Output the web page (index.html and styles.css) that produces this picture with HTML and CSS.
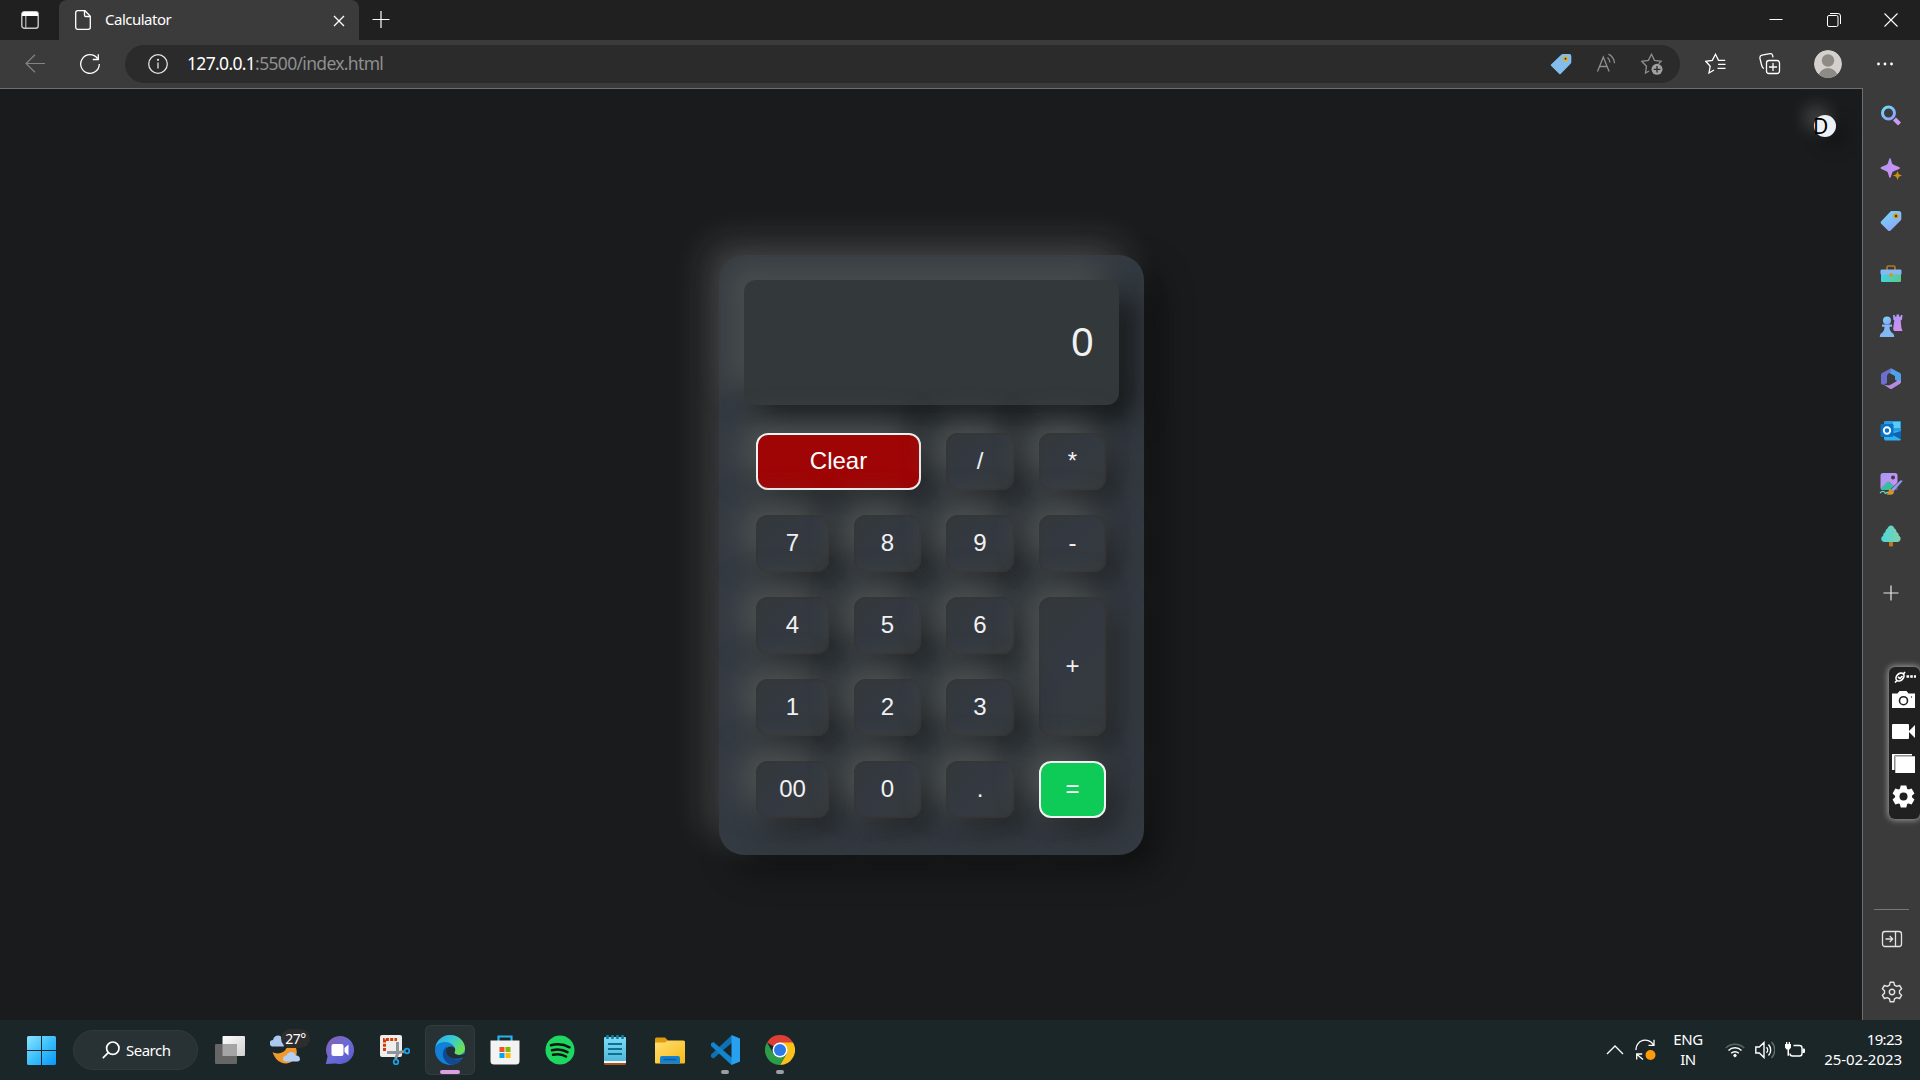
FILE: index.html
```html
<!DOCTYPE html>
<html lang="en">
<head>
<meta charset="utf-8">
<title>Calculator</title>
<link rel="stylesheet" href="styles.css">
</head>
<body>
<svg width="0" height="0" class="defs">
  <defs>
    <linearGradient id="blue" x1="0" y1="0" x2="0.6" y2="1"><stop offset="0" stop-color="#6fdcf8"/><stop offset="1" stop-color="#8ea6fb"/></linearGradient>
    <linearGradient id="violet" x1="0" y1="0" x2="0.7" y2="1"><stop offset="0" stop-color="#9d9cf5"/><stop offset="1" stop-color="#d98cf2"/></linearGradient>
    <linearGradient id="green" x1="0" y1="0" x2="1" y2="0"><stop offset="0" stop-color="#3fd3e4"/><stop offset="1" stop-color="#5cc98c"/></linearGradient>
    <linearGradient id="tree" x1="0" y1="0" x2="1" y2="0"><stop offset="0" stop-color="#4bd6dc"/><stop offset="1" stop-color="#80d1a8"/></linearGradient>
    <linearGradient id="win" x1="0" y1="0" x2="1" y2="1"><stop offset="0" stop-color="#8be4ff"/><stop offset=".5" stop-color="#3cc0fb"/><stop offset="1" stop-color="#0a96f8"/></linearGradient>
    <linearGradient id="edgeTop" x1="0" y1="0" x2="1" y2=".6"><stop offset="0" stop-color="#2ea8e4"/><stop offset=".5" stop-color="#35c9d8"/><stop offset="1" stop-color="#6fe04e"/></linearGradient>
    <linearGradient id="chat" x1="0" y1="0" x2="1" y2="1"><stop offset="0" stop-color="#8c5fae"/><stop offset=".5" stop-color="#6a6bd6"/><stop offset="1" stop-color="#5957cf"/></linearGradient>
    <linearGradient id="folder" x1="0" y1="0" x2="1" y2="1"><stop offset="0" stop-color="#ffdf73"/><stop offset="1" stop-color="#f9b915"/></linearGradient>
    <linearGradient id="silver" x1="0" y1="0" x2="1" y2="1"><stop offset="0" stop-color="#ffffff"/><stop offset="1" stop-color="#cfcfcf"/></linearGradient>
    <linearGradient id="pad" x1="0" y1="0" x2="0" y2="1"><stop offset="0" stop-color="#7fdcf4"/><stop offset="1" stop-color="#4fb9d8"/></linearGradient>
  </defs>
</svg>

<header class="titlebar">
  <div class="tab-actions">
    <svg width="18" height="18" viewBox="0 0 18 18"><rect x=".8" y=".8" width="16.4" height="16.4" rx="2.5" fill="none" stroke="#c8c8c8" stroke-width="1.4"/><path d="M1 5V3a2 2 0 0 1 2-2h12a2 2 0 0 1 2 2v2z" fill="#fff"/><path d="M4.8 5v12" stroke="#b8b8b8" stroke-width="1.2"/></svg>
  </div>
  <div class="tab">
    <svg width="16" height="20" viewBox="0 0 16 20" fill="none" stroke="#fff" stroke-width="1.3"><path d="M2.7.7H10l5.3 5.6v11a2 2 0 0 1-2 2H2.7a2 2 0 0 1-2-2V2.7a2 2 0 0 1 2-2z"/><path d="M9.5 1v4.200a1.300 1.300 0 0 0 1.300 1.300H15"/></svg>
    <span class="tab-title">Calculator</span>
    <svg class="tab-close" width="12" height="12" viewBox="0 0 12 12" stroke="#fff" stroke-width="1.3"><path d="M1 1l10 10M11 1L1 11"/></svg>
  </div>
  <svg class="new-tab" width="18" height="18" viewBox="0 0 18 18" stroke="#fff" stroke-width="1.2"><path d="M.5 8.500h17M9 0v17"/></svg>
  <div class="window-buttons">
    <svg width="14" height="14" viewBox="0 0 14 14" stroke="#fff" stroke-width="1"><path d="M.5 6.500h13"/></svg>
    <svg width="14" height="14" viewBox="0 0 14 14" fill="none" stroke="#fff" stroke-width="1"><rect x=".5" y="2.500" width="10.500" height="11" rx="1.500"/><path d="M3 .5h8a2.500 2.500 0 0 1 2.500 2.500v8"/></svg>
    <svg width="14" height="14" viewBox="0 0 14 14" stroke="#fff" stroke-width="1.100"><path d="M.5.5l13 13M13.500.5l-13 13"/></svg>
  </div>
</header>

<nav class="toolbar">
  <svg class="back" width="20" height="20" viewBox="0 0 20 20" fill="none" stroke="#838383" stroke-width="1.200"><path d="M20 9.500H1M10 .7L1 9.500l9 8.800"/></svg>
  <svg class="reload" width="20" height="20" viewBox="0 0 20 20" fill="none" stroke="#fff" stroke-width="1.300"><path d="M17.500 4.500A9.300 9.300 0 1 0 19.300 10M18.300.3v5.200h-5.500"/></svg>
  <div class="address">
    <svg class="info" width="20" height="20" viewBox="0 0 20 20" fill="none" stroke="#e2e2e2" stroke-width="1.300"><circle cx="10" cy="10" r="9.300"/><path d="M10 8.500v6"/><circle cx="10" cy="5.800" r=".5"/></svg>
    <span class="url"><b>127.0.0.1</b>:5500/index.html</span>
    <div class="address-icons">
      <svg width="22" height="22" viewBox="0 0 22 22"><path d="M11.500 1.500L1 11.500a1 1 0 0 0 0 1.200l8.300 8.200a1 1 0 0 0 1.300 0l10-10.200c.4-.4.700-1 .7-1.600V3a2 2 0 0 0-2-2h-6.500c-.5 0-1 .2-1.300.5z" fill="#84bdec"/><circle cx="15.500" cy="5.800" r="2.600" fill="#e5b320"/><circle cx="15.500" cy="5.800" r="1" fill="#333"/></svg>
      <svg width="22" height="22" viewBox="0 0 22 22" fill="none" stroke="#8f8f8f" stroke-width="1.300"><path d="M1.500 18.500L7.300 4l5.800 14.500M3.500 13.500h7.600M11.500 4.500a7 7 0 0 1 2.500 5M12.500 1.200a11 11 0 0 1 6 9"/></svg>
      <svg width="22" height="22" viewBox="0 0 22 22" fill="none" stroke="#8f8f8f" stroke-width="1.300"><path d="M8 18l-3.500 2 1-6.800L.8 8.300l6.600-1L10.500 1.300l3 6 6.700 1-2.500 2.500"/><circle cx="16" cy="16.300" r="5.500" fill="#a0a0a0" stroke="none"/><path d="M16 13v6.600M12.700 16.300h6.600" stroke="#2b2b2b"/></svg>
    </div>
  </div>
  <div class="toolbar-icons">
    <svg width="22" height="22" viewBox="0 0 22 22" fill="none" stroke="#fff" stroke-width="1.300"><path d="M9 17l-5 3 1.200-6.800L.8 8.300l6.500-1L10.500 1.300l3 6h6.700M13 11.300h7.500M12.500 15.300h8"/></svg>
    <svg width="22" height="22" viewBox="0 0 22 22" fill="none" stroke="#fff" stroke-width="1.300"><rect x="7.500" y="7.500" width="13" height="13" rx="2.500"/><path d="M14 10v8M10 14h8M5 15.500C3 14.800 2.700 13 2.300 11L1 5.500c-.4-2 .5-3 2-3.300l8-1.500c1.500-.3 2.300.5 2.600 1.700l.4 2"/></svg>
    <svg width="28" height="28" viewBox="0 0 28 28"><defs><clipPath id="avatarClip"><circle cx="14" cy="14" r="14"/></clipPath></defs><g clip-path="url(#avatarClip)"><circle cx="14" cy="14" r="14" fill="#d3d0cd"/><circle cx="14" cy="10.500" r="6.200" fill="#8e8a86"/><circle cx="14" cy="28" r="10" fill="#8e8a86"/></g></svg>
    <svg width="18" height="4" viewBox="0 0 18 4" fill="#fff"><circle cx="2.500" cy="2" r="1.400"/><circle cx="9" cy="2" r="1.400"/><circle cx="15.500" cy="2" r="1.400"/></svg>
  </div>
</nav>

<div class="workspace">
  <main class="page">
    <button class="theme-toggle">D</button>
    <section class="calculator">
      <div class="display">0</div>
      <div class="keys">
        <button class="key key-clear">Clear</button>
        <button class="key">/</button>
        <button class="key">*</button>
        <button class="key">7</button>
        <button class="key">8</button>
        <button class="key">9</button>
        <button class="key">-</button>
        <button class="key">4</button>
        <button class="key">5</button>
        <button class="key">6</button>
        <button class="key key-plus">+</button>
        <button class="key">1</button>
        <button class="key">2</button>
        <button class="key">3</button>
        <button class="key">00</button>
        <button class="key">0</button>
        <button class="key">.</button>
        <button class="key key-equals">=</button>
      </div>
    </section>
  </main>

  <aside class="sidebar">
    <div class="apps">
      <div class="app"><svg width="22" height="22" viewBox="0 0 22 22" fill="none"><circle cx="8.500" cy="8" r="6" stroke="url(#blue)" stroke-width="3"/><path d="M14.500 14l5 5" stroke="#c99bf2" stroke-width="4.200"/></svg></div>
      <div class="app"><svg width="22" height="22" viewBox="0 0 22 22"><path d="M10 0c.8 0 1.500 4 2.500 6 1 1.500 7.500 2.500 7.500 4s-6.500 2.500-7.500 4c-1 2-1.700 6-2.500 6s-1.500-4-2.500-6C6.500 12.500.5 11.500.5 10s6-2.500 7-4C8.500 4 9.200 0 10 0z" fill="url(#violet)"/><path d="M17.500 13l1.300 3.200L22 17.500l-3.200 1.300-1.300 3.200-1.300-3.200-3.200-1.300 3.200-1.300z" fill="#cb930f"/></svg></div>
      <div class="app"><svg width="22" height="22" viewBox="0 0 22 22"><path d="M10.500 1.500L1 11.500a1.500 1.500 0 0 0 0 2l7 7a2 2 0 0 0 2.600 0l10-10c.4-.4.700-1 .7-1.600V3.500A2.500 2.500 0 0 0 18.800 1h-6.500c-.7 0-1.300.1-1.800.5z" fill="url(#blue)"/><circle cx="16" cy="6" r="2.800" fill="#e59a16"/><circle cx="16" cy="6" r="1.200" fill="#333"/></svg></div>
      <div class="app"><svg width="22" height="22" viewBox="0 0 22 22"><path d="M7 7V4.500A1.500 1.500 0 0 1 8.500 3h5A1.500 1.500 0 0 1 15 4.500V7" fill="none" stroke="#b37b10" stroke-width="1.700"/><rect x="1" y="10" width="20" height="9" rx="1" fill="url(#green)"/><rect x=".5" y="6.500" width="21" height="5" rx="1.200" fill="#87b7f5"/><circle cx="11" cy="12" r="1.900" fill="#d29a22"/></svg></div>
      <div class="app"><svg width="24" height="24" viewBox="0 0 24 24"><path d="M14 1h1.800v1.500h1.700V.5h2.500v2h1.700V1h1.800l-.5 4.500-1.300 1 .7 7.500 1.200 3h-8.500l-1-2 1.200-8.500-1-1z" fill="url(#violet)"/><circle cx="8" cy="6.500" r="4" fill="url(#blue)"/><path d="M3 10.500h10v2.200h-2.500c0 3.500 1 5 3.500 6.800 1 .7 1.200 2 1.200 3.500H.8c0-1.500.2-2.800 1.200-3.500 2.500-1.800 3.500-3.300 3.500-6.800H3z" fill="#82b8f3"/></svg></div>
      <div class="app"><svg width="22" height="22" viewBox="0 0 22 22"><path d="M11 .3l9 4.700a2 2 0 0 1 1 1.700v8.500l-6-3.500V8L8.500 4.500z" fill="#4fa2ea"/><path d="M11 .3L2 5a2.500 2.500 0 0 0-1 2v8c0 2 3 2 6 0V8.500c0-2 1-3 4-4.500z" fill="#6c6fce"/><path d="M1 15l9 5.800c.7.400 1.500.4 2 0l8-5c1.500-1 1.200-3-1-4L11 16.500c-3 1.500-6 1-10-1.500z" fill="#b58be0"/></svg></div>
      <div class="app"><svg width="22" height="22" viewBox="0 0 22 22"><path d="M5 1h15a1 1 0 0 1 1 1v9l-8 6-9-6V2a1 1 0 0 1 1-1z" fill="#2b9be3"/><path d="M13 2h7v6h-7z" fill="#55cdf7"/><path d="M4 11h17v8a1.500 1.500 0 0 1-1.500 1.500H5L4 19z" fill="#33b2ef"/><path d="M21 11v8.500L11 14z" fill="#0c63b2"/><rect x=".5" y="4" width="13" height="13" rx="1.300" fill="#0873c9"/><circle cx="7" cy="10.500" r="3.200" fill="none" stroke="#fff" stroke-width="1.900"/></svg></div>
      <div class="app"><svg width="24" height="24" viewBox="0 0 24 24"><rect x="1.500" y="1" width="17" height="17" rx="2.500" fill="url(#violet)"/><path d="M2 16l6-6c1-.8 2-.8 3 0l6 6-1 2H3z" fill="#3bbba1"/><circle cx="14" cy="5.500" r="2" fill="#41364e"/><path d="M23.500 9.500L14.500 20l-3-2.500L21 8.500c1.500-1 3 0 2.500 1z" fill="#8e9ff5" stroke="#3b3b3b" stroke-width=".7"/><path d="M11.500 17l3.500 2.800c0 3.200-4 3.500-7.500 2.700 2-1 1.500-5 4-5.500z" fill="#d79328"/><path d="M1 21c3-3 5-1 5 0s3-1 3-1" fill="none" stroke="#67dfbd" stroke-width="1.300"/></svg></div>
      <div class="app"><svg width="22" height="22" viewBox="0 0 22 22"><rect x="9" y="15" width="4" height="6.500" rx="1" fill="#ba7917"/><path d="M11 .5c2 0 3 1.500 3.500 3 1.500.8 2 2 2 3.500 1.800.8 2.500 2 2.200 3.500 1.500.8 2.300 2.500 1.800 4-.5 2-2 2.500-4 2.500h-11c-2 0-3.800-.5-4.200-2.500-.3-1.600.5-3 1.900-3.800-.2-1.700.6-3 2.200-3.700 0-1.500.6-2.700 2-3.500.6-1.500 1.600-3 3.600-3z" fill="url(#tree)"/></svg></div>
      <div class="app app-add"><svg width="16" height="16" viewBox="0 0 16 16" stroke="#e8e8e8" stroke-width="1.200"><path d="M.5 8h15M8 .5v15"/></svg></div>
    </div>
    <div class="side-tools">
      <div class="app"><svg width="22" height="22" viewBox="0 0 22 22" fill="none" stroke="#e4e4e4" stroke-width="1.300"><rect x="1.500" y="3.500" width="19" height="15" rx="2.500"/><path d="M14.500 4v14M4.500 11h7M8.700 8l3 3-3 3"/></svg></div>
      <div class="app"><svg width="22" height="22" viewBox="-11 -11 22 22" fill="none" stroke="#e4e4e4" stroke-width="1.400" stroke-linejoin="round"><path d="M-1.800-9.800h3.600l.7 2.900 2.200 1.300 2.900-.9 2.100 3.300L7.500-1.200v2.400l2.200 2-2.100 3.300-2.900-.9-2.200 1.300-.7 2.900h-3.600l-.7-2.900-2.200-1.300-2.900.9-2.100-3.300 2.200-2v-2.400l-2.200-2 2.100-3.300 2.900.9 2.200-1.300z"/><circle r="2.700"/></svg></div>
    </div>
  </aside>
</div>

<div class="capture">
  <svg width="22" height="12" viewBox="0 0 22 12" fill="none" stroke="#fff" stroke-width="1.700"><ellipse cx="6" cy="6" rx="4.600" ry="3.300" transform="rotate(-45 6 6)"/><path d="M1 11.500l2-2M9 3.500l2-2.500M4 6l2 1.500 2.500-2.500"/><path d="M12.500 5.500h10" stroke-width="2.400" stroke-dasharray="2.600 1.100"/></svg>
  <svg width="23" height="17" viewBox="0 0 23 17"><path d="M0 2.500h5.500L7.500 0h7l2 2.500H23V17H0z" fill="#fff"/><circle cx="11.500" cy="9.700" r="4" fill="none" stroke="#202020" stroke-width="1.600"/><circle cx="19.500" cy="6" r=".7" fill="#202020"/></svg>
  <svg width="23" height="15" viewBox="0 0 23 15" fill="#fff"><rect width="17" height="15" rx="1"/><path d="M16.500 7.500L23 1v13z"/></svg>
  <svg width="23" height="19" viewBox="0 0 23 19" fill="#fff"><path d="M0 0h20v1.500H2.500V16H0z"/><path d="M3 2h20v17H3z" fill="#c4c4c4"/><path d="M4 3h19v16H4z"/></svg>
  <svg width="23" height="23" viewBox="-11.500 -11.500 23 23"><g fill="#fff"><circle r="8.500"/><path d="M-2.800-11h5.600l1 4h-7.600zM-2.800 11h5.600l1-4h-7.600z"/><path d="M-2.800-11h5.600l1 4h-7.600zM-2.800 11h5.600l1-4h-7.600z" transform="rotate(60)"/><path d="M-2.800-11h5.600l1 4h-7.600zM-2.800 11h5.600l1-4h-7.600z" transform="rotate(120)"/></g><circle r="4" fill="#202020"/></svg>
</div>

<footer class="taskbar">
  <div class="start"><svg width="29" height="29" viewBox="0 0 29 29" fill="url(#win)"><path d="M1.500 0H14v14H0V1.500A1.500 1.500 0 0 1 1.500 0zM15 0h12.500A1.500 1.500 0 0 1 29 1.500V14H15zM0 15h14v14H1.500A1.500 1.500 0 0 1 0 27.500zM15 15h14v12.500a1.500 1.500 0 0 1-1.500 1.500H15z"/></svg></div>
  <div class="search">
    <svg width="18" height="18" viewBox="0 0 18 18" fill="none" stroke="#fff" stroke-width="1.700"><circle cx="10.800" cy="7.200" r="6.200"/><path d="M6.300 11.700L.8 17.200"/></svg>
    <span>Search</span>
  </div>
  <div class="pins">
    <div class="pin"><svg width="30" height="30" viewBox="0 0 30 30"><rect x="7.500" y="1" width="22.500" height="20" rx="1" fill="url(#silver)"/><rect y="9" width="22" height="20" rx="1" fill="#666"/><path d="M7.500 9H22v12H7.500z" fill="#a5a5a5"/></svg></div>
    <div class="pin weather"><svg width="30" height="30" viewBox="0 0 30 30"><path d="M2.500 17c5 3 12 1 14-4l9-1c4 8-2 16.500-10 16.500-6 0-11-5-13-11.500z" fill="#f09a2c"/><path d="M3 11.500c-4 0-5-6 0-6.500C4-1 12-1 13 5l1 6.500z" fill="#a9c9f1"/><path d="M15.500 26.500c-4-1-3-6 1-6 2-5 9-4 9 0 5-1 6 6 2 6z" fill="#b4cef5"/></svg><span class="temp">27°</span></div>
    <div class="pin"><svg width="30" height="30" viewBox="0 0 30 30"><path d="M15 1a14 14 0 1 1-4 27.400L.8 29l1.800-7.500A14 14 0 0 1 15 1z" fill="url(#chat)"/><rect x="6.500" y="9" width="12" height="12" rx="2" fill="#fff"/><path d="M19.500 13l4-3.500v11l-4-3.500z" fill="#fff"/></svg></div>
    <div class="pin"><svg width="30" height="30" viewBox="0 0 30 30"><rect width="22" height="22" rx="2" fill="#eee"/><path d="M4.500 16V4.500H17" fill="none" stroke="#d83b01" stroke-width="3" stroke-dasharray="3 1.300"/><path d="M17.500 7v12l-2 5M7 17.500h12l5-1" stroke="#8d959b" stroke-width="3" fill="none"/><circle cx="16" cy="27" r="2.300" fill="none" stroke="#1ba0e8" stroke-width="1.800"/><circle cx="27" cy="16" r="2.300" fill="none" stroke="#1ba0e8" stroke-width="1.800"/></svg></div>
    <div class="pin pin-active"><svg width="30" height="30" viewBox="0 0 30 30"><circle cx="15" cy="15" r="15" fill="#1380d8"/><path d="M.2 13C1.500 5.500 7.500 0 15 0c8.500 0 15 6 15 13.500 0 4-3.500 6.500-7 6.500-3 0-4-1-4-2 0-.8 1-1 1-3 0-4-4-8-9.500-8S1.500 9 .2 13z" fill="url(#edgeTop)"/><path d="M12 11.500C6 15 6 26 16 29.800c5 0 9.500-3 12-7-7 4-16 0-16-7z" fill="#114a92"/><path d="M12.500 12.500c-3 3-1 8.500 4 10.500 4 1.500 9 1 13.500-1.500v-3c-2 1.500-6.500 2-9.500.5-1.500-1-1-2-.5-3s.5-4-3-4.500c-1.500-.3-3.700 0-4.500 1z" fill="#222f34"/></svg></div>
    <div class="pin"><svg width="30" height="30" viewBox="0 0 30 30"><path d="M8.500 6.500v-5h13v5" fill="none" stroke="#26b4ee" stroke-width="2.200"/><path d="M.5 5.500h29V26a3.500 3.500 0 0 1-3.500 3.500H4A3.500 3.500 0 0 1 .5 26z" fill="#f3f3f3"/><path d="M9.500 12h5v5h-5z" fill="#f25022"/><path d="M15.500 12h5v5h-5z" fill="#7fba00"/><path d="M9.500 18h5v5h-5z" fill="#00a4ef"/><path d="M15.500 18h5v5h-5z" fill="#ffb900"/></svg></div>
    <div class="pin"><svg width="30" height="30" viewBox="0 0 30 30"><circle cx="15" cy="15" r="14.500" fill="#1ed760"/><path d="M6 10.300c6.500-1.800 13-1 18.500 2M7 15.300c5.500-1.600 11-.9 15.500 1.800M8 19.800c4.500-1.200 9-.7 13 1.700" fill="none" stroke="#0b140e" stroke-width="2.500" stroke-linecap="round"/></svg></div>
    <div class="pin"><svg width="30" height="30" viewBox="0 0 30 30"><rect x="4" y="25" width="22" height="5" rx="1.500" fill="#a8541c"/><rect x="4" y="23" width="22" height="5" fill="#f4f4f4"/><rect x="4" y="2" width="22" height="24" rx="1" fill="url(#pad)"/><path d="M7.500 0v4M12.500 0v4M17.500 0v4M22.500 0v4" stroke="#127ea4" stroke-width="2.600"/><path d="M8 9h14M8 14h14M8 19h14" stroke="#0f6f98" stroke-width="2"/></svg></div>
    <div class="pin"><svg width="30" height="30" viewBox="0 0 30 30"><path d="M0 4a1.500 1.500 0 0 1 1.500-1.500H10l3 3V12H0z" fill="#dc9c0c"/><path d="M0 7.500h10l3-2h15.500A1.500 1.500 0 0 1 30 7v20.500a1 1 0 0 1-1 1H1a1 1 0 0 1-1-1z" fill="url(#folder)"/><path d="M5 28.500V23a2 2 0 0 1 2-2h16a2 2 0 0 1 2 2v5.500z" fill="#1582d0"/><path d="M8.500 24.500h13" stroke="#0a5ea3" stroke-width="1.500"/></svg></div>
    <div class="pin pin-open"><svg width="30" height="30" viewBox="0 0 30 30"><path d="M1 19.500L21.500.5l3 5L3.500 23.500 1 22z" fill="#0f70b3"/><path d="M1 8.500L3.500 7l21 18-3 5L1 11z" fill="#1285cd"/><path d="M21.500 0L30 3.500v23L21.500 30z" fill="#27a0f0"/></svg></div>
    <div class="pin pin-open"><svg width="30" height="30" viewBox="0 0 30 30"><path d="M15 15L2 7.500A15 15 0 0 1 28 7.500z" fill="#de3f34"/><path d="M15 15V7.500h13A15 15 0 0 1 15 30l6.500-11.200z" fill="#f9c21b"/><path d="M15 15l-6.500 3.800L2 7.500A15 15 0 0 0 15 30l6.500-11.200z" fill="#2c9c48"/><circle cx="15" cy="15" r="7.500" fill="#fff"/><circle cx="15" cy="15" r="6" fill="#2c7aea"/></svg></div>
  </div>
  <div class="tray">
    <svg class="chevron" width="18" height="10" viewBox="0 0 18 10" fill="none" stroke="#fff" stroke-width="1.300"><path d="M1 9l8-8 8 8"/></svg>
    <svg class="sync" width="22" height="22" viewBox="0 0 22 22" fill="none" stroke="#fff" stroke-width="1.300"><path d="M1 11A9.300 9.300 0 0 1 18.500 6M19 .8V6.300h-5.500M8 20.500l-6-5M1.700 20.500V15h5.500"/><circle cx="15.500" cy="16" r="5" fill="#ff9a0a" stroke="none"/></svg>
    <div class="lang"><span>ENG</span><span>IN</span></div>
    <svg class="wifi" width="20" height="16" viewBox="0 0 20 16" fill="none" stroke="#fff" stroke-width="1.500"><path d="M.8 6a13 13 0 0 1 18.400 0" stroke="#5b6568"/><path d="M3.500 8.500a9.300 9.300 0 0 1 13 0M6.200 11.300a5.400 5.400 0 0 1 7.600 0"/><circle cx="10" cy="13.500" r="1.300" fill="#fff" stroke-width=".8"/></svg>
    <svg class="sound" width="20" height="18" viewBox="0 0 20 18" fill="none" stroke="#fff" stroke-width="1.400"><path d="M.8 6h3.500L9 1.500v15L4.300 12H.8zM11.500 6.200a4 4 0 0 1 0 5.600M13.500 3.500a8 8 0 0 1 0 11"/><path d="M16.500 1a11.500 11.500 0 0 1 0 16" stroke="#647072"/></svg>
    <svg class="battery" width="20" height="16" viewBox="0 0 20 16"><path d="M8.500 3.500h6A2.500 2.500 0 0 1 17 6v5.500a2.500 2.500 0 0 1-2.500 2.500h-7A2.500 2.500 0 0 1 5 11.500" fill="none" stroke="#fff" stroke-width="1.400"/><path d="M17.500 6.500H19a1 1 0 0 1 1 1V10a1 1 0 0 1-1 1h-1.500z" fill="#fff"/><path d="M0 2h1V0h1.300v2h1.400V0H5v2h1v3.500L4.500 7.500H4v6.300H2.500V7.500H1.500L0 5.500z" fill="#fff"/></svg>
    <div class="clock"><span class="time">19:23</span><span>25-02-2023</span></div>
  </div>
</footer>
</body>
</html>
```
FILE: styles.css
```css
* { box-sizing: border-box; }

body {
  margin: 0;
  width: 1920px;
  height: 1080px;
  overflow: hidden;
  display: flex;
  flex-direction: column;
  background: #1a1b1c;
  color: #fff;
  font-family: "Noto Sans", "Open Sans", sans-serif;
}

svg { display: block; flex: none; }
.defs { position: absolute; }
button { margin: 0; padding: 0; font-family: inherit; }

/* Window title bar */
.titlebar {
  height: 40px;
  flex: none;
  display: flex;
  align-items: center;
  background: #202020;
}
.tab-actions { width: 59px; height: 40px; padding: 11px 0 0 21px; }
.tab {
  width: 300px;
  height: 40px;
  padding: 0 14px 0 16px;
  display: flex;
  align-items: center;
  background: #3b3b3b;
  border-radius: 8px 8px 0 0;
}
.tab-title { margin-left: 14px; padding-bottom: 2px; font-size: 15px; letter-spacing: -0.5px; }
.tab-close { margin-left: auto; margin-top: 1px; }
.new-tab { margin-left: 13px; }
.window-buttons { margin-left: auto; padding-right: 22px; display: flex; gap: 43.500px; }

/* Navigation toolbar */
.toolbar {
  height: 48px;
  flex: none;
  display: flex;
  align-items: center;
  background: #3b3b3b;
}
.back { margin-left: 25px; }
.reload { margin-left: 35px; }
.address {
  width: 1555px;
  height: 38px;
  margin-left: 25px;
  padding: 0 17px 0 23px;
  display: flex;
  align-items: center;
  background: #2b2b2b;
  border-radius: 19px;
}
.url { margin-left: 19px; padding-bottom: 2px; color: #8f8f8f; font-size: 17.500px; letter-spacing: -0.67px; }
.url b { color: #fff; font-weight: 400; }
.address-icons { margin-left: auto; display: flex; gap: 23px; }
.address-icons svg:first-child { margin-right: 1px; }
.toolbar-icons { flex: 1; padding: 0 26px 0 25px; display: flex; align-items: center; justify-content: space-between; }
.toolbar-icons svg:nth-child(2), .toolbar-icons svg:nth-child(3) { margin-left: -1px; margin-right: 1px; }

/* Browser body */
.workspace { height: 932px; flex: none; display: flex; background: #3b3b3b; }
.page {
  flex: none;
  width: 1863px;
  display: flex;
  flex-direction: column;
  align-items: center;
  background: #1a1b1c;
  border-top: 1px solid #6e6e6e;
  border-right: 1px solid #6e6e6e;
}
.theme-toggle {
  width: 22px;
  height: 22px;
  margin: 26px 26px 0 auto;
  text-align: left;
  border: 0;
  border-radius: 50%;
  background: #edf1f5;
  color: #000;
  font-size: 21px;
  line-height: 21px;
  text-indent: -1px;
  box-shadow: -8px -8px 18px rgba(255, 255, 255, .25), 8px 8px 18px rgba(0, 0, 0, .35);
}

/* Calculator */
.calculator {
  width: 425px;
  height: 600px;
  margin-top: 118px;
  padding: 25px;
  border-radius: 25px;
  background: #343a41;
  font-family: "Liberation Sans", Arial, sans-serif;
  box-shadow: -15px -15px 35px rgba(255, 255, 255, .15), 15px 15px 35px rgba(0, 0, 0, .4);
}
.display {
  height: 125px;
  padding: 0 25px;
  border-radius: 12px;
  background: #33383a;
  color: #f1f1f1;
  font-size: 40px;
  line-height: 124px;
  text-align: right;
  box-shadow: -15px -15px 30px rgba(96, 99, 94, .52), 15px 15px 30px rgba(12, 14, 14, .78);
}
.keys {
  margin: 28px 12px 0;
  display: grid;
  grid-template-columns: 73px 67px 68px 67px;
  grid-auto-rows: 57px;
  gap: 25px;
}
.key {
  padding: 0 0 2px 1px;
  border: 2px solid #353637;
  border-radius: 12px;
  background: linear-gradient(135deg, #33383b, #343941 45%, #343a40 65%, #35393c);
  color: #f1f1f1;
  font-size: 24px;
  box-shadow: -12px -12px 30px rgba(98, 101, 97, .6), 12px 12px 30px rgba(22, 24, 23, .6);
}
.key-clear { grid-column: span 2; background: #9f0505; border-color: #f2f2f2; color: #fff; }
.key-plus { grid-row: span 2; }
.key-equals { background: #0ecb57; border-color: #f2f2f2; color: #fff; }

/* Browser sidebar */
.sidebar { flex: 1; display: flex; flex-direction: column; justify-content: space-between; padding: 2px 1px 2px 0; }
.app { height: 52.500px; display: flex; align-items: center; justify-content: center; }
.app-add { margin-top: 4px; }
.side-tools { width: 35px; margin: 0 10px 0 11px; border-top: 1px solid #777; padding-top: 3px; }

/* Docked capture panel, floats over the window edge */
.capture {
  position: absolute;
  right: 0;
  top: 667px;
  width: 31px;
  height: 152px;
  padding: 4px 0 0 3px;
  display: flex;
  flex-direction: column;
  background: #202020;
  border-radius: 6px;
  box-shadow: 0 0 6px 1px #a0a0a0;
}
.capture svg:nth-child(1) { margin-left: 2px; }
.capture svg:nth-child(2) { margin-top: 8px; }
.capture svg:nth-child(3) { margin-top: 16px; }
.capture svg:nth-child(4) { margin-top: 15px; }
.capture svg:nth-child(5) { margin-top: 12px; }

/* Taskbar */
.taskbar { height: 60px; flex: none; display: flex; align-items: center; background: #1b2629; }
.start { padding-left: 27px; }
.search {
  width: 125px;
  height: 40px;
  margin-left: 17px;
  padding-left: 28px;
  display: flex;
  align-items: center;
  gap: 6px;
  border: 1px solid #303a3d;
  border-radius: 20px;
  background: #283235;
  font-size: 15px;
  letter-spacing: -0.5px;
}
.pins { display: flex; margin-left: 5px; }
.pin {
  position: relative;
  width: 50px;
  height: 50px;
  margin-right: 5px;
  display: flex;
  align-items: center;
  justify-content: center;
}
.pins .pin:first-child { margin-left: 2px; }
.pin-active { border-radius: 6px; background: #283235; box-shadow: inset 0 0 0 1px #323c3f; }
.pin-active::after, .pin-open::after {
  content: "";
  position: absolute;
  bottom: 1px;
  left: 21px;
  width: 8px;
  height: 4px;
  border-radius: 2px;
  background: #9a9fa1;
}
.pin-active::after { left: 15px; width: 20px; background: #dc9fe2; }
.temp {
  position: absolute;
  top: 4px;
  left: 21px;
  width: 29px;
  height: 19px;
  border-radius: 10px;
  background: #2d2d2d;
  font-size: 14px;
  line-height: 19px;
  text-align: center;
  letter-spacing: -0.5px;
}

.tray { flex: 1; display: flex; align-items: center; padding-right: 18px; }
.chevron { margin-left: auto; }
.sync { margin-left: 11px; }
.lang, .clock { display: flex; flex-direction: column; font-size: 15px; line-height: 20px; padding-bottom: 2px; letter-spacing: -0.4px; }
.lang { width: 40px; margin-left: 11px; align-items: center; }
.wifi { margin-left: 17px; }
.sound { margin-left: 10px; }
.battery { margin-left: 10px; }
.clock { width: 97px; align-items: flex-end; letter-spacing: -0.05px; }
.time { letter-spacing: -0.6px; }
```
